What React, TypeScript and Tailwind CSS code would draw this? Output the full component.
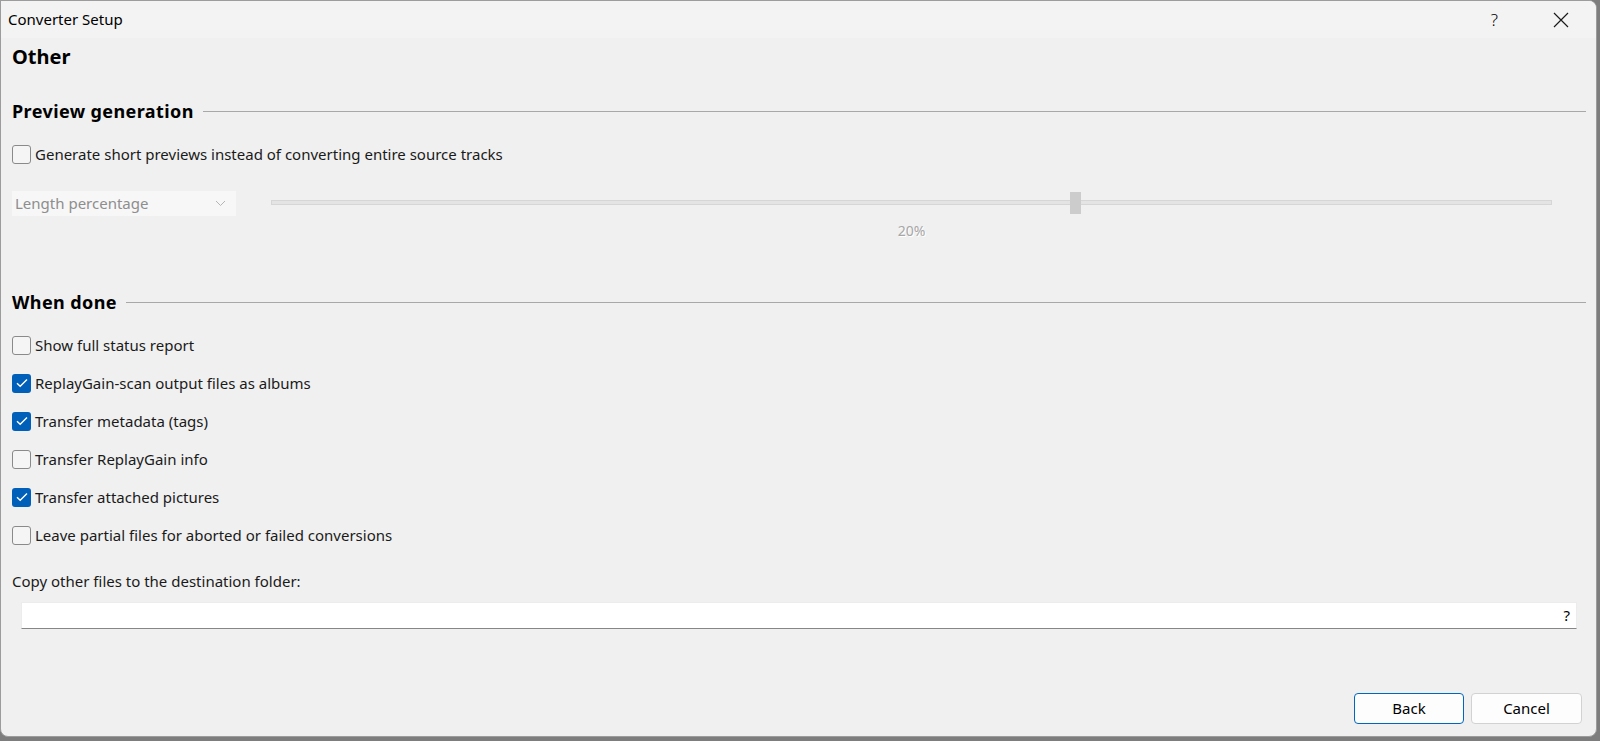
import React from "react";

const FONT = { fontFamily: '"Noto Sans", "Open Sans", sans-serif' };

const DONE_OPTIONS: { label: string; checked: boolean }[] = [
  { label: "Show full status report", checked: false },
  { label: "ReplayGain-scan output files as albums", checked: true },
  { label: "Transfer metadata (tags)", checked: true },
  { label: "Transfer ReplayGain info", checked: false },
  { label: "Transfer attached pictures", checked: true },
  { label: "Leave partial files for aborted or failed conversions", checked: false },
];

export default function App() {
  return (
    <div className="h-[741px] w-[1600px] overflow-hidden bg-[#7d7d7d]" style={FONT}>
      <div className="flex h-[737px] w-[1597px] flex-col overflow-hidden rounded-tr-[8px] rounded-br-[8px] rounded-bl-[8px] border border-[#9c9c9c] bg-[#f0f0f0] text-[#1a1a1a]">
        {/* Title bar */}
        <div className="flex h-[37px] shrink-0 items-center bg-[#f3f3f3] pl-[7px]">
          <span className="text-[15px] text-black">Converter Setup</span>
          <span className="ml-auto mr-[55px] text-[17px] font-light text-black">?</span>
          <svg className="mr-[27px]" width="16" height="16" viewBox="0 0 16 16">
            <path d="M1 1L15 15M15 1L1 15" stroke="#1a1a1a" strokeWidth="1.2" />
          </svg>
        </div>

        <div className="flex flex-1 flex-col pl-[11px] pr-[10px]">
          <h1 className="mt-[5px] h-[28px] text-[20px] font-bold leading-[28px] text-black">Other</h1>

          <SectionHeader title="Preview generation" className="mt-[28px]" />

          <CheckRow label="Generate short previews instead of converting entire source tracks" checked={false} className="mt-[21px]" />

          <div className="mt-[27px] flex items-start">
            <div className="flex h-[25px] w-[224px] items-center justify-between bg-[#f7f7f7] pl-[3px] pr-[10px] text-[15px] text-[#8e8e8e]">
              <span>Length percentage</span>
              <svg width="11" height="7" viewBox="0 0 11 7">
                <path d="M1 1L5.5 5.5L10 1" fill="none" stroke="#b5b5b5" strokeWidth="1" />
              </svg>
            </div>
            <div className="ml-[35px] flex flex-1 flex-col items-center pr-[34px]">
              <div className="relative mt-[1px] h-[22px] w-full">
                <div className="absolute top-[8px] right-0 left-0 h-[5px] border border-[#d6d6d6] bg-[#e4e4e4]" />
                <div className="absolute top-0 left-[799px] h-[22px] w-[11px] bg-[#cccccc]" />
              </div>
              <span className="mt-[6px] text-[14px] text-[#a7a7a7] [text-shadow:1px_1px_0_#ffffff]">20%</span>
            </div>
          </div>

          <SectionHeader title="When done" className="mt-[49px]" />

          <div className="mt-[21px] flex flex-col gap-[18px]">
            {DONE_OPTIONS.map((o) => (
              <CheckRow key={o.label} label={o.label} checked={o.checked} />
            ))}
          </div>

          <p className="mt-[25px] h-[22px] text-[15px] leading-[22px] text-[#1a1a1a]">Copy other files to the destination folder:</p>

          <div className="mt-[10px] ml-[9px] mr-[9px] flex h-[27px] items-center justify-end border border-[#ececec] border-b-[#868686] bg-white pr-[6px] text-[15px] text-black">
            ?
          </div>

          <div className="mt-[64px] mr-[4px] flex justify-end gap-[7px]">
            <button className="h-[31px] w-[110px] rounded-[4px] border border-[#0067c0] bg-[#fdfdfd] text-[15px] text-black">Back</button>
            <button className="h-[31px] w-[111px] rounded-[4px] border border-[#d2d2d2] bg-[#fdfdfd] text-[15px] text-black">Cancel</button>
          </div>
        </div>
      </div>
    </div>
  );
}

function SectionHeader({ title, className = "" }: { title: string; className?: string }) {
  return (
    <div className={`flex h-[24px] items-center ${className}`}>
      <span className="text-[18px] font-bold tracking-[0.4px] text-black">{title}</span>
      <div className="ml-[9px] h-px flex-1 bg-[#a8a8a8]" />
    </div>
  );
}

function CheckRow({ label, checked, className = "" }: { label: string; checked: boolean; className?: string }) {
  return (
    <div className={`flex h-[20px] items-center gap-[4px] ${className}`}>
      {checked ? (
        <span className="flex h-[19px] w-[19px] items-center justify-center rounded-[3px] bg-[#005fb8]">
          <svg width="12" height="10" viewBox="0 0 12 10">
            <path d="M1 5.2L4.2 8.3L11 1.5" fill="none" stroke="white" strokeWidth="1.4" />
          </svg>
        </span>
      ) : (
        <span className="h-[19px] w-[19px] rounded-[3px] border border-[#8a8a8a] bg-[#f5f5f5]" />
      )}
      <span className="text-[15px] text-[#1a1a1a]">{label}</span>
    </div>
  );
}
